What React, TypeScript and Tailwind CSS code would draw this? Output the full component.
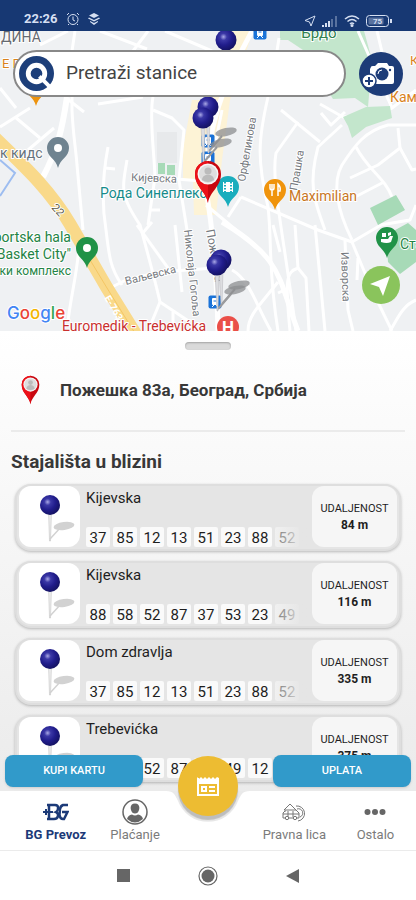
import type { ReactNode } from 'react';

type Stop = { id: number; name: string; distance: string; lines: number[] };

const stops: Stop[] = [
  { id: 1, name: 'Kijevska', distance: '84 m', lines: [37, 85, 12, 13, 51, 23, 88, 52] },
  { id: 2, name: 'Kijevska', distance: '116 m', lines: [88, 58, 52, 87, 37, 53, 23, 49] },
  { id: 3, name: 'Dom zdravlja', distance: '335 m', lines: [37, 85, 12, 13, 51, 23, 88, 52] },
  { id: 4, name: 'Trebevićka', distance: '375 m', lines: [88, 58, 52, 87, 37, 49, 12] },
];

const minorRoads = [
  'M100 31L147 49', 'M133 51L148 31', 'M165 31L212 51', 'M75 31L72 51', 'M40 45L68 31', 'M0 88L16 108',
  'M72 51L72 110C73 135 76 150 77 165L83 230', 'M65 97L84 112', 'M98 104L143 97', 'M153 97C149 115 154 150 155 177L148 225',
  'M0 127L30 108', 'M15 117L40 138', 'M28 150L54 128', 'M108 147C104 168 101 200 106 230C109 255 110 268 122 285', 'M105 168L115 169',
  'M127 160C122 190 120 195 140 225C150 262 155 280 160 302L190 322', 'M137 225L168 268', 'M142 234L152 222',
  'M153 110L172 118L184 130L179 180L187 230', 'M163 178L202 181', 'M150 210L160 210', 'M110 288L126 280L160 272L215 268',
  'M175 225L182 292', 'M79 245C78 270 70 300 68 322', 'M173 312L173 331', 'M160 302L148 331',
  'M268 97C258 140 257 160 268 207C272 240 268 270 278 331', 'M281 110L320 142', 'M298 122L276 153C271 180 282 225 296 331',
  'M342 125L318 147C308 185 314 200 325 230', 'M321 113L331 125L345 112', 'M320 104L343 117L380 113',
  'M416 125H388C365 131 355 145 342 165C332 182 337 210 352 240', 'M356 147C368 170 385 178 392 197', 'M350 178L378 165L400 148L398 128',
  'M355 197L384 182', 'M400 148L412 170L416 169', 'M380 225L410 220L416 205', 'M206 205L236 230', 'M241 197L318 230L352 242L381 225',
  'M241 197L228 217', 'M222 110L206 190', 'M279 38L277 51', 'M358 31L392 108L416 90', 'M377 31L382 52', 'M360 125L392 108',
  'M315 225L325 331', 'M345 241L348 310L353 331', 'M352 242L372 290L392 331', 'M358 258L357 280', 'M416 300C402 306 398 318 390 331',
  'M295 225L298 268C286 272 285 280 290 331', 'M298 268L306 278L309 331', 'M278 282C260 305 248 315 248 331', 'M232 270C250 280 256 305 271 331',
  'M273 225L280 252', 'M289 288L278 293',
];

function Halo({ x, y, size = 11, fill = '#75797e', rotate = 0, weight = 400, anchor = 'start', children }: {
  x: number; y: number; size?: number; fill?: string; rotate?: number; weight?: number; anchor?: 'start' | 'middle' | 'end'; children: ReactNode;
}) {
  return (
    <text x={x} y={y} fontSize={size} fill={fill} fontWeight={weight} textAnchor={anchor} stroke="#fff" strokeWidth="2" strokeLinejoin="round"
      paintOrder="stroke" transform={`rotate(${rotate} ${x} ${y})`}>
      {children}
    </text>
  );
}

function Marker({ x, y, color, children }: { x: number; y: number; color: string; children?: ReactNode }) {
  return (
    <g transform={`translate(${x} ${y})`}>
      <path d="M0 20C-2 11-11 9-11 0A11 11 0 0 1 11 0C11 9 2 11 0 20Z" fill={color} />
      {children}
    </g>
  );
}

function BusStop({ x, y }: { x: number; y: number }) {
  return (
    <g transform={`translate(${x} ${y})`}>
      <rect x="-6.500" y="-6.500" width="13" height="13" rx="2" fill="#1a73d8" />
      <rect x="-3" y="-4" width="6" height="7" rx="1" fill="#fff" />
      <path d="M-2-2H2V0H-2ZM-3 5L-1 3M3 5L1 3" fill="#1a73d8" stroke="#fff" />
    </g>
  );
}

function MapPin({ x, y, shadow = true }: { x: number; y: number; shadow?: boolean }) {
  return (
    <g transform={`translate(${x} ${y})`}>
      {shadow && <path d="M1 44L14 29" stroke="#9a9b9d" strokeWidth="2" />}
      {shadow && <ellipse cx="18" cy="25" rx="11" ry="4" transform="rotate(-12 18 25)" fill="#8c8d90" opacity=".75" />}
      <path d="M-2 8H2L1 46H0Z" fill="#dcdde0" stroke="#b4b5ba" strokeWidth=".5" />
      <circle r="10.500" fill="url(#ball)" />
    </g>
  );
}

function UserPin() {
  return (
    <>
      <path d="M0 29C-2 17-13 13-13 0A13 13 0 0 1 13 0C13 13 2 17 0 29Z" fill="#c8070f" />
      <path d="M0 29C-2 17-13 13-13 0A13 13 0 0 1 0-13Z" fill="#ec1119" />
      <circle r="10.500" fill="#f6f6f6" />
      <circle r="9" fill="#dedede" />
      <circle cy="-3" r="3.500" fill="#bbb" />
      <path d="M-6 6C-6-1 6-1 6 6Q0 10-6 6Z" fill="#bbb" />
    </>
  );
}

function CityMap() {
  return (
    <svg className="block h-full w-full" viewBox="0 31 416 300" preserveAspectRatio="xMidYMid slice" role="img" aria-label="Mapa"
      fontFamily='Roboto, "Noto Sans", sans-serif'>
      <defs>
        <radialGradient id="ball" cx=".38" cy=".35" r=".65">
          <stop offset="0" stopColor="#a9a8e6" />
          <stop offset=".25" stopColor="#3b38a6" />
          <stop offset=".6" stopColor="#211d8c" />
          <stop offset="1" stopColor="#151365" />
        </radialGradient>
      </defs>
      <rect y="31" width="416" height="300" fill="#eff1f3" />
      <path d="M231 31H253L230 100L222 160L216 215H194L193 181L183 180V148L192 100H205L228 70Z" fill="#fdf3d6" />
      <path d="M280 31H364L372 60L368 107L355 98L333 99L318 75L303 50L288 40H280Z" fill="#c3e6cc" />
      <g fill="none" stroke="#fff" strokeWidth="3" strokeLinejoin="round">
        {minorRoads.map((d) => <path key={d} d={d} />)}
        <path d="M67 97C62 130 58 148 43 177" strokeWidth="6" />
        <path d="M252 31C225 80 205 130 206 190C214 235 217 290 218 331" strokeWidth="5" />
        <path d="M222 222C285 260 278 280 298 331" strokeWidth="5" />
      </g>
      <path d="M343 117L366 107L390 106L392 118L366 127L352 138L348 126Z" fill="#c3e6cc" />
      <path d="M370 208L396 195L405 210L378 225ZM386 235L408 223L416 230V262L400 274L388 262Z" fill="#a7dab7" />
      <path d="M157 132H177V163H157Z" fill="#e7e9eb" />
      <path d="M158 163H165V174H158ZM167 165H175V175H167Z" fill="#a7dab7" />
      <path d="M0 160L15 173L0 196" fill="none" stroke="#9dbdf0" strokeWidth="2" />
      <path d="M-5 138C25 167 50 190 70 224L107 288L138 338" fill="none" stroke="#f9d98a" strokeWidth="13" />
      <path d="M78 240L107 288L138 338" fill="none" stroke="#f4c664" strokeWidth="1" />

      <Halo x={1} y={42} size={14} fill="#666a70">ДИНА</Halo>
      <Halo x={2} y={68} size={13} fill="#d9821c">Е ГР</Halo>
      <Halo x={319} y={38} size={15} fill="#32834f" anchor="middle">Брдо</Halo>
      <Halo x={0} y={158} size={14} fill="#66727c">к кидс</Halo>
      <Halo x={131} y={181} rotate={2}>Кијевска</Halo>
      <Halo x={100} y={198} size={14} fill="#168b8b">Рода Синеплекс</Halo>
      <Halo x={51} y={208} size={11} fill="#5d5a4a" rotate={48}>22</Halo>
      <Halo x={126} y={285} rotate={-14}>Ваљевска</Halo>
      <text x="104" y="298" fontSize="10" fontWeight="700" fill="#fff" transform="rotate(60 104 298)">Е-763</text>
      <Halo x={184} y={230} rotate={84}>Николаја Гогоља</Halo>
      <Halo x={206} y={230} rotate={80} size={12}>Пожешка</Halo>
      <Halo x={245} y={182} rotate={-80}>Орфелинова</Halo>
      <Halo x={297} y={191} rotate={-80}>Прашка</Halo>
      <Halo x={341} y={252} rotate={88}>Изворска</Halo>
      <Halo x={289} y={201} size={14} fill="#c8761f">Maximilian</Halo>
      <Halo x={410} y={65} size={13} fill="#d9821c">К</Halo>
      <Halo x={390} y={102} size={14} fill="#d9821c">Каменица</Halo>
      <Halo x={400} y={249} size={14} fill="#248345">Старт</Halo>
      <Halo x={71} y={242} size={14} fill="#248345" anchor="end">Sportska hala</Halo>
      <Halo x={71} y={259} size={14} fill="#248345" anchor="end">"Basket City"</Halo>
      <Halo x={71} y={275} size={12} fill="#248345" anchor="end">Спортски комплекс</Halo>
      <Halo x={62} y={331} size={14} fill="#c9302f">Euromedik - Trebevićka</Halo>

      <Marker x={36} y={86} color="#ed930e" />
      <Marker x={58} y={148} color="#6f8390"><circle r="4" fill="#fff" /></Marker>
      <Marker x={87} y={248} color="#209247"><circle r="4" fill="#fff" /></Marker>
      <Marker x={228} y={187} color="#19adbd">
        <path d="M-5-5H5V5H-5Z" fill="#fff" />
        <path d="M-3-5V5M3-5V5" stroke="#19adbd" strokeWidth="2" strokeDasharray="1.500 1.500" />
      </Marker>
      <Marker x={275} y={190} color="#f0940c">
        <path d="M-5-6V-2Q-5 0-3 0T-1-2V-6M-3-6V6M3 6V-6Q6-3 5 1H3" fill="none" stroke="#fff" strokeWidth="1.500" />
      </Marker>
      <Marker x={387} y={238} color="#209247">
        <path d="M-6 1H1L3-2H6L4 4Q0 6-6 4ZM-5-5H-1V-1H-5ZM1-5L4-6V-3L1-2Z" fill="#fff" />
      </Marker>
      <BusStop x={260} y={33} />
      <BusStop x={208} y={141} />
      <BusStop x={208} y={158} />
      <BusStop x={215} y={302} />
      <circle cx="228" cy="327" r="11" fill="#ea4f48" />
      <text x="228" y="333" fontSize="17" fontWeight="700" fill="#fff" textAnchor="middle">H</text>
      <MapPin x={226} y={40} shadow={false} />
      <MapPin x={208} y={107} />
      <MapPin x={203} y={118} />
      <MapPin x={221} y={260} />
      <MapPin x={217} y={265} />
      <g transform="translate(208 174)"><UserPin /></g>
      <text x="7" y="319" fontSize="17" fontWeight="500" fontFamily="Inter, sans-serif" stroke="#fff" strokeWidth="2" paintOrder="stroke">
        <tspan fill="#4285f4">G</tspan><tspan fill="#ea4335">o</tspan><tspan fill="#f4b400">o</tspan><tspan fill="#4285f4">g</tspan><tspan fill="#34a853">l</tspan><tspan fill="#ea4335">e</tspan>
      </text>
    </svg>
  );
}

function StatusBar() {
  return (
    <header className="flex h-[31px] shrink-0 items-end justify-between bg-[#173873] pr-6 pb-1 pl-6 text-[#d5dff2]">
      <div className="flex items-center gap-2">
        <time className="text-[13px] leading-4 font-bold">22:26</time>
        <svg className="size-3.5" viewBox="0 0 14 14" fill="none" stroke="currentColor" aria-hidden="true">
          <circle cx="7" cy="7.500" r="5" /><path d="M7 4.500V8L9 9M1 3L3 1M13 3L11 1M3 12L2 13M11 12L12 13" />
        </svg>
        <svg className="size-3" viewBox="0 0 12 12" fill="currentColor" aria-hidden="true">
          <path d="M6 0L11 2.500L6 5L1 2.500ZM1 4.500L6 7L11 4.500L12 5.500L6 8.500L0 5.500ZM2 8L6 10L10 8V9L6 12L2 9Z" />
        </svg>
      </div>
      <div className="flex items-center gap-1.5">
        <svg className="size-3" viewBox="0 0 12 12" fill="none" stroke="currentColor" aria-hidden="true"><path d="M11 1L7 11L5.500 7L1 5.500Z" /></svg>
        <svg className="h-3 w-4" viewBox="0 0 16 12" fill="currentColor" aria-hidden="true">
          <path d="M0 10H2V12H0ZM3 8H5V12H3ZM6 6H8V12H6Z" /><path d="M9 4H11V12H9ZM13 1H15V12H13Z" opacity=".35" />
        </svg>
        <svg className="h-3 w-4" viewBox="0 0 16 12" fill="none" stroke="currentColor" strokeWidth="1.500" aria-hidden="true">
          <path d="M1 4Q8-2 15 4M3.500 6.500Q8 2.500 12.500 6.500M6 9Q8 7 10 9" /><circle cx="8" cy="10.500" r=".8" />
        </svg>
        <svg className="h-3 w-[26px]" viewBox="0 0 26 12" fill="none" stroke="currentColor" aria-label="75%">
          <rect x=".5" y=".5" width="22" height="11" rx="3" /><rect x="2.500" y="2.500" width="15" height="7" rx="1" fill="currentColor" opacity=".35" stroke="none" /><path d="M25 4V8" strokeWidth="2" />
          <text x="11.500" y="9" fontSize="8" fontWeight="700" textAnchor="middle" fill="currentColor" stroke="none">75</text>
        </svg>
      </div>
    </header>
  );
}

function StopCard({ stop }: { stop: Stop }) {
  return (
    <li className="flex h-[67px] rounded-2xl border-2 border-[#dedede] bg-[#e5e5e5] px-0.5 pb-0.5 shadow-[0_1px_3px_rgba(0,0,0,0.25)]">
      <div className="grid w-[61px] shrink-0 place-items-center rounded-xl bg-white">
        <svg className="h-[54px] w-[61px]" viewBox="-19 0 61 54" aria-hidden="true">
          <path d="M12 49L23 37" stroke="#d2d2d2" strokeWidth="1.500" />
          <ellipse cx="26" cy="36" rx="10.500" ry="4" transform="rotate(-8 26 36)" fill="#d2d2d2" />
          <path d="M10.500 20H13.500L12.500 51H11.500Z" fill="#eee" stroke="#b8b8b8" strokeWidth=".5" />
          <circle cx="12" cy="15" r="10" fill="url(#ball)" />
        </svg>
      </div>
      <div className="relative flex min-w-0 flex-1 flex-col justify-between overflow-hidden pl-1.5">
        <h3 className="text-[15px] leading-6 text-[#1e1e1e]">{stop.name}</h3>
        <ul className="flex gap-[3px]">
          {stop.lines.map((line) => (
            <li key={line} className="h-5 w-6 shrink-0 rounded-xs bg-[#fafafa] text-center text-[15px] leading-[22px] text-[#1e1e1e]">{line}</li>
          ))}
        </ul>
        <div className="absolute right-0 bottom-0 h-5 w-10 bg-linear-to-r from-[#e5e5e5]/40 to-[#e5e5e5] to-80%" />
      </div>
      <div className="flex w-[85px] shrink-0 flex-col items-center justify-center rounded-xl bg-[#f6f6f6] text-[11px] leading-4 text-[#1e1e1e]">
        <span>UDALJENOST</span>
        <strong className="text-xs leading-4">{stop.distance}</strong>
      </div>
    </li>
  );
}

function Tab({ label, active = false, children }: { label: string; active?: boolean; children: ReactNode }) {
  return (
    <a href="#" aria-current={active ? 'page' : undefined}
      className={`flex flex-1 flex-col items-center pt-2 text-[13px] leading-5 ${active ? 'font-bold text-[#1c3a78]' : 'text-[#7b7b7b]'}`}>
      <span className="grid h-[26px] place-items-center">{children}</span>
      {label}
    </a>
  );
}

export default function App() {
  return (
    <div className="flex h-dvh flex-col overflow-hidden bg-white font-[Roboto,'Noto_Sans',sans-serif]">
      <StatusBar />
      <section className="relative h-[300px] shrink-0">
        <CityMap />
        <div className="absolute inset-x-[13px] top-[19px] flex items-center gap-[13px]">
          <label className="flex h-[47px] min-w-0 flex-1 items-center gap-3 rounded-full border-2 border-[#888] bg-white pl-1">
            <svg className="size-[35px] shrink-0" viewBox="0 0 36 36" aria-hidden="true">
              <circle cx="18" cy="18" r="18" fill="#1d3f7a" />
              <circle cx="18" cy="18" r="8.500" fill="none" stroke="#fff" strokeWidth="5" />
              <path d="M21 21L33 33" stroke="#fff" strokeWidth="4" />
            </svg>
            <input type="search" placeholder="Pretraži stanice" aria-label="Pretraži stanice"
              className="w-full min-w-0 bg-transparent text-[19px] text-[#444] outline-none placeholder:text-[#444]" />
          </label>
          <button type="button" aria-label="Dodaj fotografiju" className="size-[44px] shrink-0 rounded-full bg-[#1d3c78]">
            <svg viewBox="0 0 44 44" fill="none">
              <path d="M12 15Q12 14 14 14H16L19 11H28L30 14H33Q35 14 35 16V30Q35 32 33 32H13Q11 32 11 30V17Z" fill="#fff" />
              <circle cx="23" cy="22" r="6.500" fill="#1d3c78" />
              <path d="M19 22A4 4 0 0 1 23 18" stroke="#fff" />
              <circle cx="31" cy="18" r="1.200" fill="#1d3c78" />
              <circle cx="10" cy="29" r="7" fill="#fff" stroke="#1d3c78" strokeWidth="1.500" />
              <path d="M10 25V33M6 29H14" stroke="#1d3c78" strokeWidth="2" />
            </svg>
          </button>
        </div>
        <button type="button" aria-label="Moja lokacija" className="absolute right-4 bottom-[27px] size-[38px] rounded-full bg-[#8ac45c]">
          <svg viewBox="0 0 38 38" fill="#fff"><path d="M28 10L21 30L17 21L8 18Z" /></svg>
        </button>
      </section>

      <main className="relative min-h-0 flex-1 bg-linear-to-b from-white to-[#ebebeb]">
        <div className="flex h-full flex-col overflow-hidden px-[11px]">
          <div className="mx-auto mt-[11px] h-2 w-[46px] shrink-0 rounded-full bg-[#dadada] shadow-[inset_0_1px_2px_rgba(0,0,0,0.25)]" />
          <div className="flex h-[82px] shrink-0 items-center gap-5 border-b-2 border-[#ebebeb] pl-2.5">
            <svg className="h-[30px] w-[19px]" viewBox="-14 -14 28 44" aria-hidden="true"><UserPin /></svg>
            <p className="text-[17px] leading-6 font-bold text-[#383838]">Пожешка 83а, Београд, Србија</p>
          </div>
          <h2 className="mt-4 text-[19px] leading-7 font-bold text-[#383838]">Stajališta u blizini</h2>
          <ul className="mx-1 mt-2 flex flex-col gap-2.5">
            {stops.map((stop) => <StopCard key={stop.id} stop={stop} />)}
          </ul>
        </div>
        <div className="absolute inset-x-[5px] bottom-1 flex justify-between text-[11px] font-medium text-white">
          <button type="button" className="h-8 w-[34%] rounded-lg bg-[#319aca] shadow-sm">KUPI KARTU</button>
          <button type="button" className="h-8 w-[34%] rounded-lg bg-[#319aca] shadow-sm">UPLATA</button>
        </div>
      </main>

      <nav className="relative flex h-[60px] shrink-0 justify-between border-b border-[#ebebeb] bg-white">
        <svg className="absolute top-0 left-1/2 h-[34px] w-[84px] -translate-x-1/2" viewBox="0 0 84 34" aria-hidden="true">
          <path d="M0 0C8 0 9 4 12 10A32 32 0 0 0 72 10C75 4 76 0 84 0Z" fill="#e9e9e9" />
        </svg>
        <button type="button" aria-label="Vesti" className="absolute -top-[35px] left-1/2 grid size-[60px] -translate-x-1/2 place-items-center rounded-full bg-[#edbc32] shadow-[0_4px_1px_#bdbdbd]">
          <svg className="size-6" viewBox="0 0 24 24" fill="none" stroke="#fff" strokeWidth="2" aria-hidden="true">
            <path d="M2 4V21H22V4M2 9H22M13 13H19M13 17H19" /><path d="M6 13H10V17H6Z" />
            <path d="M1 3L3 5L5 3L7 5L9 3L11 5L13 3L15 5L17 3L19 5L21 3L23 4V8H1Z" fill="#fff" stroke="none" />
          </svg>
        </button>
        <div className="flex w-[42%] pl-4">
          <Tab label="BG Prevoz" active>
            <svg className="h-[18px] w-[26px]" viewBox="0 0 26 18" fill="none" stroke="currentColor" strokeWidth="2.500" aria-hidden="true">
              <path d="M4 2H12Q15.500 2 15 5.500Q15 8 13 9Q15.500 10 15 13Q14.500 16 11 16H4M6 2V16" />
              <path d="M0 9H10M3 6V12" strokeWidth="2" />
              <path d="M25 2H20Q17.500 3 17 6L16.500 12Q17 16 20 16H21L24.500 9H19" />
            </svg>
          </Tab>
          <Tab label="Plaćanje">
            <svg className="size-[26px]" viewBox="0 0 26 26" aria-hidden="true">
              <circle cx="13" cy="13" r="12" fill="none" stroke="#666" strokeWidth="1.500" />
              <path d="M13 4.500C17 4.500 18 8 17 11Q16 14.500 13 14.500T9 11C8 8 9 4.500 13 4.500ZM5 20Q6 16 10 15.500Q13 17.500 16 15.500Q20 16 21 20Q13 27 5 20Z" fill="#666" />
            </svg>
          </Tab>
        </div>
        <div className="flex w-[39%]">
          <Tab label="Pravna lica">
            <svg className="h-5 w-6" viewBox="0 0 24 20" fill="none" stroke="#777" aria-hidden="true">
              <path d="M2 8L8 2L14 8M3 10V8H14L17 11V16H1V11L3 9M1 12H17M6 9V15M11 9V15M14 4A7 7 0 1 1 16 19M15 7A4 4 0 1 1 18 15" />
              <circle cx="5" cy="16" r="1.700" fill="#fff" /><circle cx="13" cy="16" r="1.700" fill="#fff" />
            </svg>
          </Tab>
          <Tab label="Ostalo">
            <svg className="h-2 w-[22px]" viewBox="0 0 22 8" fill="#666" aria-hidden="true"><circle cx="3.500" cy="4" r="3" /><circle cx="11" cy="4" r="3" /><circle cx="18.500" cy="4" r="3" /></svg>
          </Tab>
        </div>
      </nav>

      <footer className="flex h-[49px] shrink-0 items-center justify-center gap-[68px] bg-white">
        <button type="button" aria-label="Nedavno"><svg className="size-[13px]" viewBox="0 0 13 13"><path d="M0 0H13V13H0Z" fill="#666" /></svg></button>
        <button type="button" aria-label="Početna">
          <svg className="size-5" viewBox="0 0 20 20" fill="#666"><circle cx="10" cy="10" r="6.500" /><circle cx="10" cy="10" r="9" fill="none" stroke="#666" strokeWidth="1.200" /></svg>
        </button>
        <button type="button" aria-label="Nazad"><svg className="h-3.5 w-[13px]" viewBox="0 0 13 14"><path d="M13 0V14L0 7Z" fill="#666" /></svg></button>
      </footer>
    </div>
  );
}
